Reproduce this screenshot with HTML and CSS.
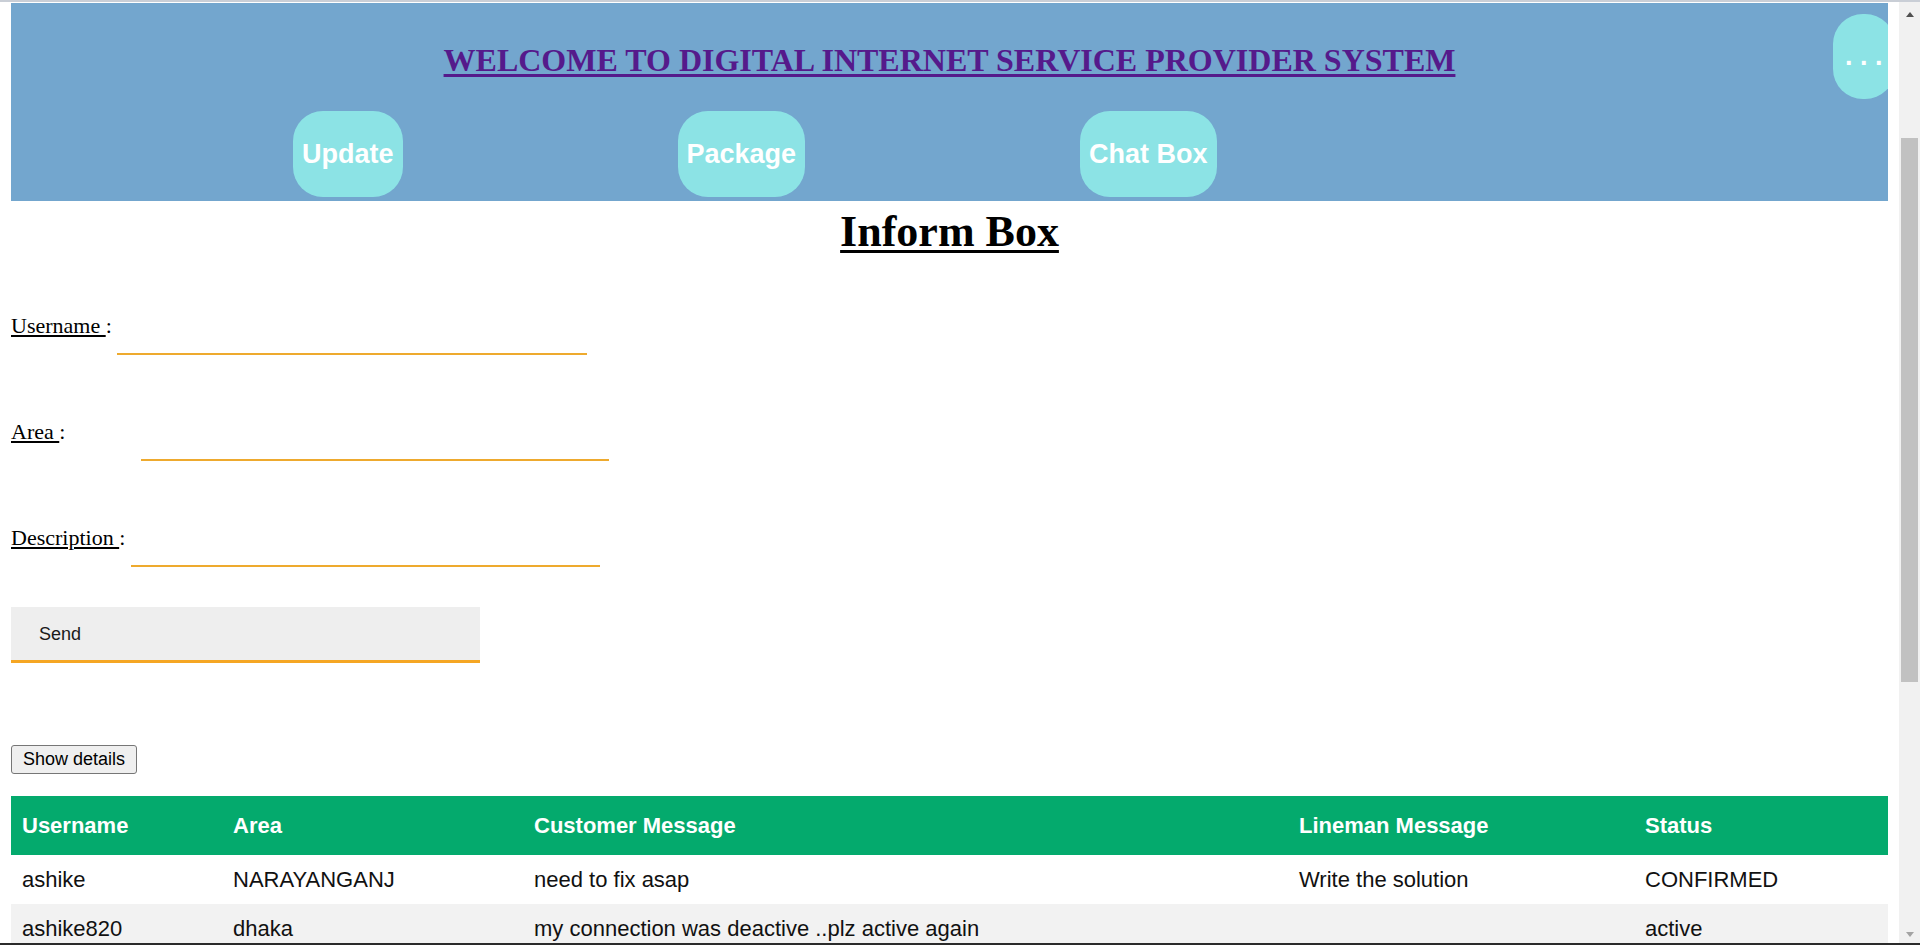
FILE: index.html
```html
<!DOCTYPE html>
<html lang="en">
<head>
<meta charset="utf-8">
<title>Digital Internet Service Provider System</title>
<link rel="stylesheet" href="styles.css">
</head>
<body>
<div class="window">
  <div class="page">
    <header class="topbar">
      <h1 class="site-title"><a href="#">WELCOME TO DIGITAL INTERNET SERVICE PROVIDER SYSTEM</a></h1>
      <nav class="nav">
        <a class="nav-btn" href="#">Update</a>
        <a class="nav-btn" href="#">Package</a>
        <a class="nav-btn" href="#">Chat Box</a>
      </nav>
      <button class="more-btn" type="button">. . .</button>
    </header>

    <h2 class="box-title">Inform Box</h2>

    <form class="inform-form">
      <div class="field field-first">
        <label class="field-label"><span class="u">Username </span>:</label>
        <input class="field-input in-username" type="text">
      </div>
      <div class="field">
        <label class="field-label"><span class="u">Area </span>:</label>
        <input class="field-input in-area" type="text">
      </div>
      <div class="field">
        <label class="field-label"><span class="u">Description </span>:</label>
        <input class="field-input in-desc" type="text">
      </div>
      <button class="send-btn" type="button">Send</button>
    </form>

    <button class="details-btn" type="button">Show details</button>

    <table class="customers">
      <colgroup>
        <col class="c-user">
        <col class="c-area">
        <col class="c-cmsg">
        <col class="c-lmsg">
        <col class="c-status">
      </colgroup>
      <thead>
        <tr>
          <th>Username</th>
          <th>Area</th>
          <th>Customer Message</th>
          <th>Lineman Message</th>
          <th>Status</th>
        </tr>
      </thead>
      <tbody>
        <tr>
          <td>ashike</td>
          <td>NARAYANGANJ</td>
          <td>need to fix asap</td>
          <td>Write the solution</td>
          <td>CONFIRMED</td>
        </tr>
        <tr>
          <td>ashike820</td>
          <td>dhaka</td>
          <td>my connection was deactive ..plz active again</td>
          <td></td>
          <td>active</td>
        </tr>
      </tbody>
    </table>
  </div>
  <div class="scrollbar" aria-hidden="true">
    <span class="sb-arrow sb-up"></span>
    <span class="sb-thumb"></span>
    <span class="sb-arrow sb-down"></span>
  </div>
</div>
</body>
</html>
```

FILE: styles.css
```css
html, body {
  margin: 0;
  height: 100%;
  overflow: hidden;
}

body {
  display: flex;
  flex-direction: column;
  box-sizing: border-box;
  border-top: 2px solid #c9ced6;
  background: #ffffff;
  font-family: "Liberation Serif", "Times New Roman", serif;
  color: #000;
}

.window {
  flex: 1;
  min-height: 0;
  display: flex;
  border-bottom: 2px solid #2b2b2b;
}

.page {
  flex: 1;
  min-width: 0;
  overflow: hidden;
  padding: 1px 11px 0;
}

/* ---------- header ---------- */
.topbar {
  position: relative;
  overflow: hidden;
  background: #73a6ce;
  padding: 39px 0 4px;
}

.site-title {
  margin: 0;
  text-align: center;
  font-family: "Liberation Serif", "Times New Roman", serif;
  font-size: 32px;
  font-weight: bold;
  line-height: 37px;
}

.site-title a {
  color: #551a8b;
  text-decoration: underline;
  text-decoration-thickness: 3px;
  text-underline-offset: 3px;
}

.nav {
  display: flex;
  gap: 275px;
  padding-left: 282px;
  margin-top: 32px;
}

.nav-btn {
  display: flex;
  align-items: center;
  height: 86px;
  padding: 0 9px;
  background: #8ce3e5;
  border-radius: 30px;
  color: #ffffff;
  font-family: "Liberation Sans", Arial, sans-serif;
  font-weight: bold;
  font-size: 27px;
  text-decoration: none;
}

.more-btn {
  position: absolute;
  top: 11px;
  right: -7px;
  height: 85px;
  width: 62px;
  padding: 0 0 0 12px;
  border: none;
  border-radius: 30px;
  background: #8ce3e5;
  color: #ffffff;
  font-family: "Liberation Sans", Arial, sans-serif;
  font-weight: bold;
  font-size: 27px;
  text-align: left;
  white-space: nowrap;
}

/* ---------- inform box ---------- */
.box-title {
  margin: 5px 0 0;
  text-align: center;
  font-family: "Liberation Serif", "Times New Roman", serif;
  font-size: 44px;
  font-weight: bold;
  line-height: normal;
  text-decoration: underline;
  text-decoration-thickness: 3px;
  text-underline-offset: 4px;
}

.inform-form {
  margin-top: 50px;
}

.field {
  display: flex;
  align-items: baseline;
  margin-top: 58px;
}

.field-first {
  margin-top: 0;
}

.field-label {
  font-family: "Liberation Serif", "Times New Roman", serif;
  font-size: 22px;
  line-height: normal;
  white-space: pre;
}

.field-label .u {
  text-decoration: underline;
}

.field-input {
  box-sizing: border-box;
  width: 469px;
  padding: 12px 8px 16px;
  border: none;
  border-bottom: 2px solid #eeaa2e;
  outline: none;
  background: transparent;
  font-family: "Liberation Sans", Arial, sans-serif;
  font-size: 16px;
}

.in-username { margin-left: 5px; width: 470px; }
.in-area { margin-left: 76px; width: 468px; }
.in-desc { margin-left: 6px; }

.send-btn {
  display: block;
  box-sizing: border-box;
  width: 469px;
  margin-top: 40px;
  padding: 17px 28px 16px;
  border: none;
  border-bottom: 3px solid #f5a623;
  background: #eeeeee;
  color: #1a1a1a;
  text-align: left;
  font-family: "Liberation Sans", Arial, sans-serif;
  font-size: 18px;
  line-height: 20px;
}

.details-btn {
  display: block;
  margin-top: 82px;
  padding: 3px 11px 4px;
  border: 1px solid #767676;
  border-radius: 3px;
  background: #efefef;
  color: #000;
  font-family: "Liberation Sans", Arial, sans-serif;
  font-size: 18px;
  line-height: 20px;
}

/* ---------- table ---------- */
.customers {
  margin-top: 22px;
  width: 100%;
  border-collapse: collapse;
  table-layout: fixed;
  font-family: "Liberation Sans", Arial, sans-serif;
  font-size: 22px;
  line-height: 25px;
  color: #111;
}

.c-user { width: 211px; }
.c-area { width: 301px; }
.c-cmsg { width: 765px; }
.c-lmsg { width: 346px; }
.c-status { width: 254px; }

.customers th {
  padding: 17px 11px;
  text-align: left;
  background: #04aa6d;
  color: #ffffff;
  font-weight: bold;
}

.customers td {
  padding: 12px 11px;
  text-align: left;
}

.customers tbody tr:nth-child(even) {
  background: #f2f2f2;
}

/* ---------- window scrollbar ---------- */
.scrollbar {
  width: 21px;
  flex: none;
  display: flex;
  flex-direction: column;
  align-items: center;
  background: #f1f1f1;
}

.sb-arrow {
  width: 0;
  height: 0;
  border-left: 4px solid transparent;
  border-right: 4px solid transparent;
}

.sb-up {
  margin-top: 10px;
  border-bottom: 5px solid #505050;
}

.sb-thumb {
  width: 17px;
  height: 544px;
  margin-top: 121px;
  background: #c1c1c1;
}

.sb-down {
  margin-top: auto;
  margin-bottom: 6px;
  border-top: 5px solid #a3a3a3;
}
```
